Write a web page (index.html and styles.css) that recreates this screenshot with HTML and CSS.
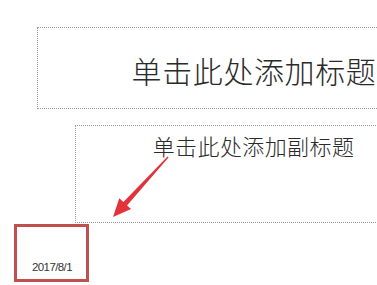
FILE: index.html
```html
<!DOCTYPE html>
<html lang="zh-CN">
  <head>
    <meta charset="UTF-8" />
    <meta name="viewport" content="width=device-width, initial-scale=1.0" />
    <title>幻灯片</title>
    <link rel="stylesheet" href="styles.css">
  </head>
  <body>
    <div class="slide">
      <div class="title-box">
        <span class="title-text">单击此处添加标题</span>
      </div>
      <div class="subtitle-box">
        <span class="subtitle-text">单击此处添加副标题</span>
      </div>

      <svg class="arrow" width="377" height="285" viewBox="0 0 377 285">
        <polygon
          points="167.5,156.5 123.4,202 119.3,198.3 113,217 131.1,209.1 127,205.4 168.5,157.5"
          fill="#e2323a"
        />
      </svg>

      <div class="date-box">
        <span class="date-text">2017/8/1</span>
      </div>
    </div>
  </body>
</html>
```

FILE: styles.css
```css
body {
  margin: 0;
  padding: 0;
  background-color: #fff;
  font-family: "Noto Sans CJK SC", "Liberation Sans", sans-serif;
  color: #2a2a2a;
}

.slide {
  position: relative;
  width: 377px;
  height: 285px;
  overflow: hidden;
  background-color: #fff;
  padding-top: 27px;
  box-sizing: border-box;
}

.title-box {
  margin-left: 37px;
  width: 434px;
  height: 82px;
  box-sizing: border-box;
  border: 1px dotted #999;
  display: flex;
  justify-content: center;
  align-items: center;
  padding-top: 4px;
}

.title-text {
  font-size: 30px;
  letter-spacing: 0.6px;
  line-height: 1.2;
  font-weight: 300;
  white-space: nowrap;
}

.subtitle-box {
  margin-top: 16px;
  margin-left: 75px;
  width: 357px;
  height: 98px;
  box-sizing: border-box;
  border: 1px dotted #999;
  display: flex;
  justify-content: center;
  padding-top: 6px;
}

.subtitle-text {
  font-size: 22px;
  letter-spacing: 0.4px;
  line-height: 1.2;
  font-weight: 300;
  white-space: nowrap;
}

.arrow {
  position: absolute;
  left: 0;
  top: 0;
}

.date-box {
  position: absolute;
  left: 14px;
  top: 224px;
  width: 75px;
  height: 58px;
  box-sizing: border-box;
  border: 3px solid #c0504d;
  background-color: #fff;
  display: flex;
  align-items: flex-end;
  padding: 0 0 6px 15px;
}

.date-text {
  font-family: "Liberation Sans", Arial, sans-serif;
  font-size: 11.5px;
  line-height: 12px;
  letter-spacing: -0.6px;
  color: #333;
}
```
